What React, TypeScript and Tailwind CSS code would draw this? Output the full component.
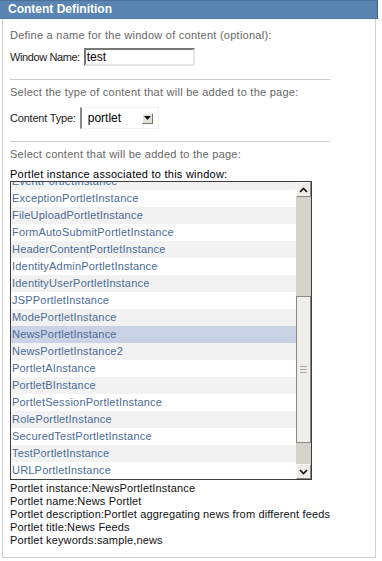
const instances = [
  'EventPortletInstance',
  'ExceptionPortletInstance',
  'FileUploadPortletInstance',
  'FormAutoSubmitPortletInstance',
  'HeaderContentPortletInstance',
  'IdentityAdminPortletInstance',
  'IdentityUserPortletInstance',
  'JSPPortletInstance',
  'ModePortletInstance',
  'NewsPortletInstance',
  'NewsPortletInstance2',
  'PortletAInstance',
  'PortletBInstance',
  'PortletSessionPortletInstance',
  'RolePortletInstance',
  'SecuredTestPortletInstance',
  'TestPortletInstance',
  'URLPortletInstance',
];

const selected = 'NewsPortletInstance';

function ScrollButton({ up }: { up?: boolean }) {
  return (
    <div className="h-[15px] shrink-0 bg-[#efece6] border border-t-[#fbfaf8] border-l-[#fbfaf8] border-r-[#8d897f] border-b-[#8d897f] flex items-center justify-center">
      <svg width="9" height="6" viewBox="0 0 9 6">
        {up ? (
          <path d="M1 5 L4.5 1.5 L8 5" fill="none" stroke="#111" strokeWidth="1.6" />
        ) : (
          <path d="M1 1 L4.5 4.5 L8 1" fill="none" stroke="#111" strokeWidth="1.6" />
        )}
      </svg>
    </div>
  );
}

export default function App() {
  return (
    <div className="w-[378px] min-h-[561px] bg-white font-['Liberation_Sans',Arial,sans-serif] text-[11px]">
      <div className="h-[19px] bg-[#5a84b2] border-t border-t-[#4c7099] border-b border-b-[#4f759f] border-r border-r-[#3f5f85] pl-[8px] text-white font-bold text-[12px] leading-[17px]">
        Content Definition
      </div>
      <div className="mx-[2px] border-x border-b border-[#d0d0d0] pl-[7px] pt-[10px] pb-[10px]">
        <div className="leading-[13px] text-[#666] tracking-[0.25px]">Define a name for the window of content (optional):</div>
        <div className="mt-[6px] flex items-center gap-[4px] text-[#222]">
          <span className="tracking-[-0.4px]">Window Name:</span>
          <div className="w-[111px] h-[18px] border-2 border-t-[#777] border-l-[#777] border-r-[#e6e6e6] border-b-[#e6e6e6] flex items-center pl-[1px] text-[12px] text-black">
            test
          </div>
        </div>
        <div className="mt-[13px] w-[320px] h-px bg-[#cccccc]" />
        <div className="mt-[6px] leading-[13px] text-[#666] tracking-[0.25px]">Select the type of content that will be added to the page:</div>
        <div className="mt-[8px] flex items-center gap-[4px] text-[#222]">
          <span className="tracking-[-0.2px]">Content Type:</span>
          <div className="w-[79px] h-[22px] border-l-2 border-l-[#888] border-t border-t-[#eee] border-r border-r-[#f2f2f2] border-b border-b-[#f2f2f2] flex items-center justify-between pl-[6px] pr-[5px] text-[12px] text-black">
            <span>portlet</span>
            <div className="w-[11px] h-[11px] bg-[#e4e1db] border border-t-[#fff] border-l-[#fff] border-r-[#777] border-b-[#777] flex items-center justify-center">
              <svg width="7" height="4" viewBox="0 0 7 4">
                <path d="M0 0 H7 L3.5 4 Z" fill="#111" />
              </svg>
            </div>
          </div>
        </div>
        <div className="mt-[12px] w-[320px] h-px bg-[#cccccc]" />
        <div className="mt-[6px] leading-[13px] text-[#666] tracking-[0.25px]">Select content that will be added to the page:</div>
        <div className="mt-[7px] leading-[13px] text-black tracking-[0.25px]">Portlet instance associated to this window:</div>
        <div className="w-[302px] h-[299px] border border-[#3c3c3c] flex">
          <div className="flex-1 overflow-hidden">
            <ul className="-mt-[9px]">
              {instances.map((name, i) => (
                <li
                  key={name}
                  className={`h-[17px] leading-[17px] pl-px text-[#4b6b98] tracking-[0.2px] ${
                    name === selected ? 'bg-[#c9d3e5]' : i % 2 === 0 ? 'bg-[#f2f2f2]' : 'bg-white'
                  }`}
                >
                  {name}
                </li>
              ))}
            </ul>
          </div>
          <div className="w-[15px] flex flex-col bg-[#d6d2c9]">
            <ScrollButton up />
            <div className="h-[99px] shrink-0" />
            <div className="h-[147px] shrink-0 bg-[#f0eeea] border border-[#8d897f] flex flex-col items-center justify-center gap-[2px]">
              <div className="w-[7px] h-px bg-[#a9a59b]" />
              <div className="w-[7px] h-px bg-[#a9a59b]" />
              <div className="w-[7px] h-px bg-[#a9a59b]" />
            </div>
            <div className="flex-1" />
            <ScrollButton />
          </div>
        </div>
        <div className="mt-[2px] leading-[13px] text-[#111] tracking-[0.15px]">
          <div>Portlet instance:NewsPortletInstance</div>
          <div>Portlet name:News Portlet</div>
          <div>Portlet description:Portlet aggregating news from different feeds</div>
          <div>Portlet title:News Feeds</div>
          <div>Portlet keywords:sample,news</div>
        </div>
      </div>
    </div>
  );
}
